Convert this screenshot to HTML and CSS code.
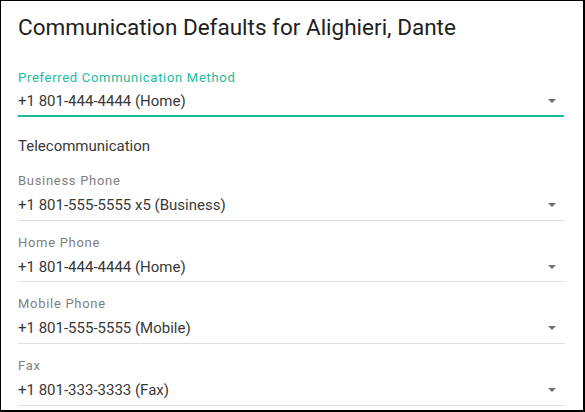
FILE: index.html
```html
<!DOCTYPE html>
<html>
<head>
<meta charset="utf-8">
<link rel="stylesheet" href="styles.css">
</head>
<body>
<div class="panel">
  <h1 class="title">Communication Defaults for Alighieri, Dante</h1>
  <div class="field field-active">
    <div class="label">Preferred Communication Method</div>
    <div class="value-row">
      <span class="value">+1 801-444-4444 (Home)</span>
      <span class="arrow"></span>
    </div>
  </div>
  <div class="section">Telecommunication</div>
  <div class="field">
    <div class="label">Business Phone</div>
    <div class="value-row">
      <span class="value">+1 801-555-5555 x5 (Business)</span>
      <span class="arrow"></span>
    </div>
  </div>
  <div class="field">
    <div class="label">Home Phone</div>
    <div class="value-row">
      <span class="value">+1 801-444-4444 (Home)</span>
      <span class="arrow"></span>
    </div>
  </div>
  <div class="field">
    <div class="label">Mobile Phone</div>
    <div class="value-row">
      <span class="value">+1 801-555-5555 (Mobile)</span>
      <span class="arrow"></span>
    </div>
  </div>
  <div class="field">
    <div class="label">Fax</div>
    <div class="value-row">
      <span class="value">+1 801-333-3333 (Fax)</span>
      <span class="arrow"></span>
    </div>
  </div>
</div>
</body>
</html>
```
FILE: styles.css
```css
html, body {
  margin: 0;
  padding: 0;
  background: #fff;
}
body {
  font-family: Roboto, "Liberation Sans", sans-serif;
}
.panel {
  box-sizing: border-box;
  width: 585px;
  height: 412px;
  border-style: solid;
  border-color: #000;
  border-width: 1px 2px 2px 1px;
  padding: 12.3px 18px 0 17px;
  overflow: hidden;
}
.title {
  margin: 0;
  font-size: 22.5px;
  line-height: 28px;
  font-weight: 400;
  color: #212121;
}
.field {
  border-bottom: 1px solid #e0e0e0;
  padding: 14px 0 4.8px;
}
.field .value-row {
  margin-top: 5.8px;
}
.field-active {
  border-bottom: 2px solid #1abc9c;
  padding: 28.25px 0 4px;
  margin-right: 1px;
}
.field-active .value-row {
  margin-top: 5.4px;
}
.field-active .label {
  color: #1abc9c;
}
.label {
  font-size: 13px;
  line-height: 16px;
  letter-spacing: 0.7px;
  color: #7f7f7f;
}
.value-row {
  display: flex;
  align-items: center;
  justify-content: space-between;
  height: 20px;
}
.value {
  font-size: 15px;
  line-height: 20px;
  color: #383838;
}
.arrow {
  width: 0;
  height: 0;
  border-left: 4.5px solid transparent;
  border-right: 4.5px solid transparent;
  border-top: 4.5px solid #6e6e6e;
  margin-right: 9px;
}
.field-active .arrow {
  margin-right: 8px;
}
.section {
  font-size: 15px;
  line-height: 20px;
  color: #383838;
  padding: 18.6px 0 3.6px;
}
```
